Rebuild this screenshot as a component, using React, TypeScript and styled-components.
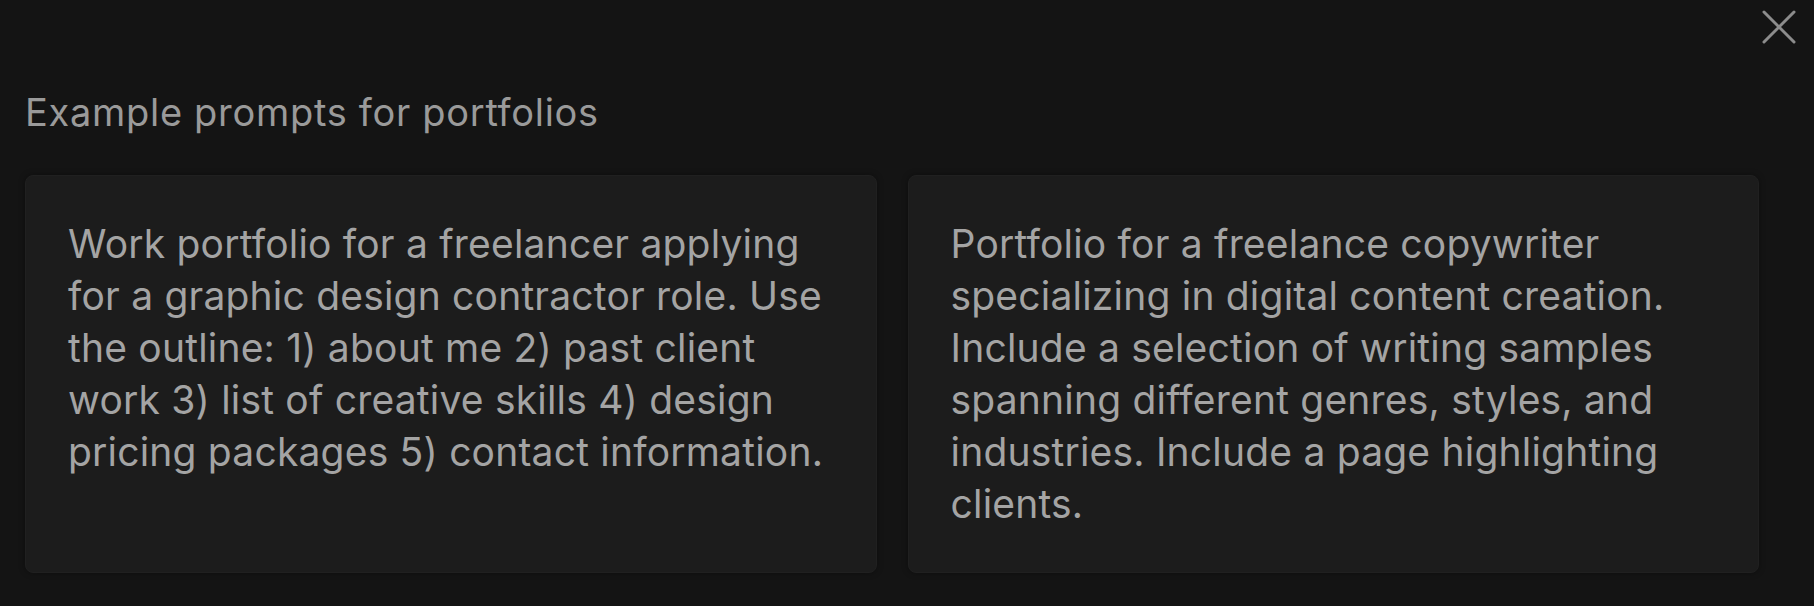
import React from 'react';
import styled, { createGlobalStyle } from 'styled-components';

const Global = createGlobalStyle`
    html, body {
        margin: 0;
        padding: 0;
        background: #141414;
    }
    body {
        font-family: Inter, "Noto Sans", "Liberation Sans", sans-serif;
        -webkit-font-smoothing: antialiased;
    }
`

const Page = styled.div`
    width: 1814px;
    height: 606px;
    box-sizing: border-box;
    padding: 10px 18px 0 25px;
    display: flex;
    flex-direction: column;
    background: #141414;
    overflow: hidden;
`

const CloseRow = styled.div`
    display: flex;
    justify-content: flex-end;
    height: 34px;
`

const CloseButton = styled.button`
    width: 34px;
    height: 34px;
    padding: 0;
    border: none;
    background: transparent;
    color: #8c8c8c;
    cursor: pointer;
    display: flex;
    align-items: center;
    justify-content: center;
`

const Title = styled.h2`
    margin: 46px 0 0 0;
    font-size: 38px;
    line-height: 44px;
    font-weight: 400;
    color: #9a9a9a;
    letter-spacing: 0.7px;
`

const Grid = styled.div`
    margin: 41px 37px 0 0;
    display: grid;
    grid-template-columns: 1fr 1fr;
    gap: 31px;
`

const Card = styled.div`
    height: 398px;
    box-sizing: border-box;
    padding: 42px 40px 0 42px;
    background: #1c1c1c;
    border: 1px solid #202020;
    border-radius: 8px;
    box-shadow: 0 0 6px rgba(0, 0, 0, 0.35);
    color: #a4a4a4;
    font-size: 39px;
    line-height: 52px;
    letter-spacing: 0.2px;
`

const prompts = [
    'Work portfolio for a freelancer applying for a graphic design contractor role. Use the outline: 1) about me 2) past client work 3) list of creative skills 4) design pricing packages 5) contact information.',
    'Portfolio for a freelance copywriter specializing in digital content creation. Include a selection of writing samples spanning different genres, styles, and industries. Include a page highlighting clients.',
]

const App: React.FC = () => {
    return <>
        <Global />
        <Page>
            <CloseRow>
                <CloseButton aria-label='Close'>
                    <svg width='34' height='34' viewBox='0 0 34 34'>
                        <path d='M2 2 L32 32 M32 2 L2 32' stroke='currentColor' strokeWidth='3' strokeLinecap='round' />
                    </svg>
                </CloseButton>
            </CloseRow>

            <Title>Example prompts for portfolios</Title>

            <Grid>
                {prompts.map((p, i) => <Card key={i}>{p}</Card>)}
            </Grid>
        </Page>
    </>
}

export default App;
